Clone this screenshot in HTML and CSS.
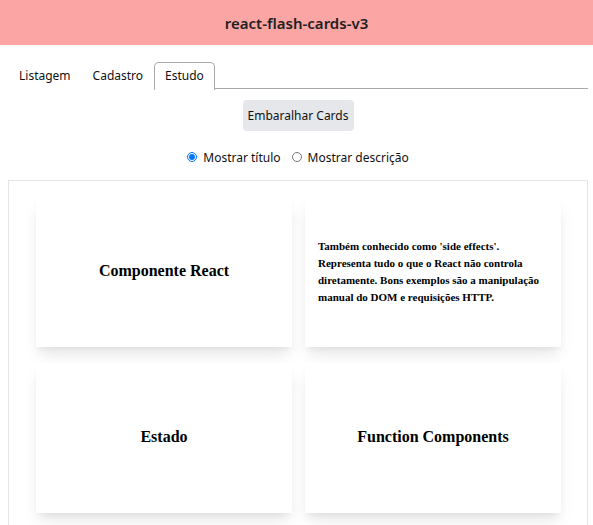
FILE: index.html
```html
<!DOCTYPE html>
<html lang="pt-BR">
<head>
<meta charset="utf-8">
<link rel="stylesheet" href="styles.css">
</head>
<body>
<header class="header">react-flash-cards-v3</header>
<main class="main">
  <ul class="tabs">
    <li class="tab">Listagem</li>
    <li class="tab">Cadastro</li>
    <li class="tab tab-selected">Estudo</li>
  </ul>
  <div class="actions">
    <button class="btn">Embaralhar Cards</button>
  </div>
  <div class="radios">
    <label class="radio"><input type="radio" name="show" checked> Mostrar título</label>
    <label class="radio"><input type="radio" name="show"> Mostrar descrição</label>
  </div>
  <section class="cards">
    <div class="card"><span class="card-title">Componente React</span></div>
    <div class="card card-desc"><span class="card-text">Também conhecido como 'side effects'. Representa tudo o que o React não controla diretamente. Bons exemplos são a manipulação manual do DOM e requisições HTTP.</span></div>
    <div class="card"><span class="card-title">Estado</span></div>
    <div class="card"><span class="card-title">Function Components</span></div>
  </section>
</main>
</body>
</html>
```
FILE: styles.css
```css
* { box-sizing: border-box; }
html, body { margin: 0; padding: 0; background: #fff; }
body {
  font-family: "Noto Sans", "Open Sans", Arial, sans-serif;
  font-size: 12px;
  color: #111;
  overflow: hidden;
}
.header {
  height: 45px;
  background: #fca5a5;
  display: flex;
  align-items: center;
  justify-content: center;
  font-size: 15px;
  font-weight: 600;
  color: #1f1f1f;
}
.main { padding: 16px 5px 0 8px; }
.tabs {
  list-style: none;
  margin: 0;
  padding: 0;
  display: flex;
  border-bottom: 1px solid #aaa;
  height: 28px;
}
.tab {
  padding: 0 10px;
  height: 28px;
  line-height: 26px;
  border: 1px solid transparent;
  border-bottom: none;
  position: relative;
  top: 1px;
  background: #fff;
}
.tab-selected {
  border-color: #aaa;
  border-radius: 5px 5px 0 0;
}
.actions {
  display: flex;
  justify-content: center;
  margin-top: 11px;
}
.btn {
  font: inherit;
  color: #111;
  background: #e5e7eb;
  border: none;
  border-radius: 4px;
  width: 111px;
  height: 31px;
  padding: 0;
}
.radios {
  display: flex;
  justify-content: center;
  gap: 11px;
  margin-top: 17px;
  height: 18px;
  align-items: center;
}
.radio { display: flex; align-items: center; gap: 5px; }
.radio input {
  width: 10px;
  height: 10px;
  margin: 0 1px 0 0;
}
.cards {
  margin-top: 14px;
  border: 1px solid #e5e5e5;
  border-bottom: none;
  padding: 16px 26px 40px 27px;
  display: grid;
  grid-template-columns: 256px 256px;
  column-gap: 13px;
  row-gap: 16px;
  width: 580px;
}
.card {
  height: 150px;
  background: #fff;
  box-shadow: 0 10px 15px -3px rgba(0,0,0,0.1), 0 4px 6px -2px rgba(0,0,0,0.05);
  display: flex;
  align-items: center;
  justify-content: center;
  font-family: "Liberation Serif", "Times New Roman", serif;
  font-weight: bold;
  color: #000;
}
.card-title { font-size: 16px; position: relative; top: -1px; }
.card-desc { justify-content: flex-start; padding: 0 13px; }
.card-text { font-size: 11px; line-height: 16.8px; }
```
